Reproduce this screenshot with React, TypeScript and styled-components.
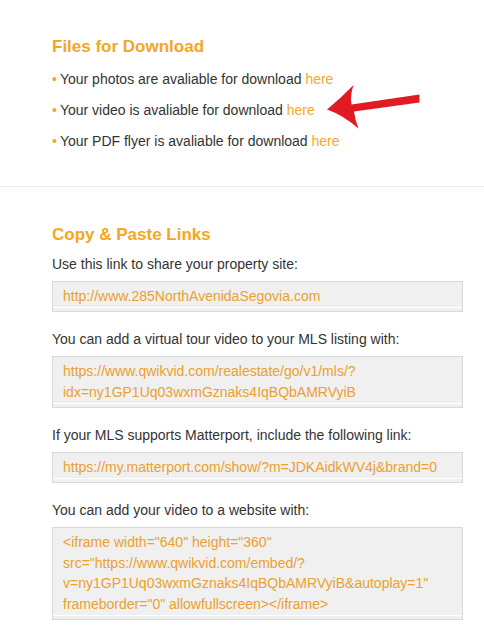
import React from 'react';
import styled, { createGlobalStyle } from 'styled-components';

const GlobalStyle = createGlobalStyle`
  body {
    margin: 0;
    background: #fff;
    font-family: "Liberation Sans", Arial, sans-serif;
    color: #333;
  }
`;

const Page = styled.div`
  width: 484px;
`;

const Section = styled.section<{ $top: number; $bottom: number; $divider?: boolean }>`
  position: relative;
  padding: ${(p) => p.$top}px 21px ${(p) => p.$bottom}px 52px;
  border-bottom: ${(p) => (p.$divider ? '1px solid #ebebeb' : 'none')};
`;

const Heading = styled.h2`
  margin: 0;
  font-size: 17px;
  line-height: 20px;
  font-weight: bold;
  color: #f5a623;
`;

const BulletList = styled.ul`
  list-style: none;
  margin: 7px 0 0;
  padding: 0;
`;

const BulletItem = styled.li`
  font-size: 14px;
  line-height: 31px;
  color: #333;

  &::before {
    content: '•';
    color: #f5a623;
    margin-right: 3px;
  }
`;

const Link = styled.a`
  color: #f7a72b;
  text-decoration: none;
`;

const Label = styled.p<{ $first?: boolean }>`
  margin: ${(p) => (p.$first ? '9px' : '0')} 0 6px;
  font-size: 14px;
  line-height: 21px;
  color: #333;
`;

const CodeBox = styled.div`
  margin-bottom: 17px;
  padding: 4px 10px 4px;
  border: 1px solid #d9d9d9;
  background: #f0f0f0;
  box-shadow: inset 0 -3px 0 #f0f0f0, inset 0 -4px 0 #fff;
  font-size: 14px;
  line-height: 20.9px;
  color: #eba12e;
  word-break: break-all;
`;

const Arrow = styled.svg`
  position: absolute;
  left: 325px;
  top: 82px;
`;

const files = ['photos are', 'video is', 'PDF flyer is'];

const links = [
  {
    label: 'Use this link to share your property site:',
    lines: ['http://www.285NorthAvenidaSegovia.com'],
  },
  {
    label: 'You can add a virtual tour video to your MLS listing with:',
    lines: ['https://www.qwikvid.com/realestate/go/v1/mls/?', 'idx=ny1GP1Uq03wxmGznaks4IqBQbAMRVyiB'],
  },
  {
    label: 'If your MLS supports Matterport, include the following link:',
    lines: ['https://my.matterport.com/show/?m=JDKAidkWV4j&brand=0'],
  },
  {
    label: 'You can add your video to a website with:',
    lines: [
      '<iframe width="640" height="360"',
      'src="https://www.qwikvid.com/embed/?',
      'v=ny1GP1Uq03wxmGznaks4IqBQbAMRVyiB&autoplay=1"',
      'frameborder="0" allowfullscreen></iframe>',
    ],
  },
];

const App: React.FC = () => {
  return (
    <Page>
      <GlobalStyle />
      <Section $top={37} $bottom={29} $divider>
        <Heading>Files for Download</Heading>
        <BulletList>
          {files.map((f) => (
            <BulletItem key={f}>
              Your {f} avaliable for download <Link href="#">here</Link>
            </BulletItem>
          ))}
        </BulletList>
        <Arrow width="100" height="50" viewBox="325 82 100 50">
          <path
            d="M327,109.5 Q341,98 353.5,85 Q350,95 351.5,104.5 L419.5,94.5 L419.5,102.5 L354,111.5 Q355,120 358.5,128.5 Q343,115 327,109.5 Z"
            fill="#e01b22"
          />
        </Arrow>
      </Section>
      <Section $top={38} $bottom={18}>
        <Heading>Copy &amp; Paste Links</Heading>
        {links.map((l, i) => (
          <React.Fragment key={l.label}>
            <Label $first={i === 0}>{l.label}</Label>
            <CodeBox>
              {l.lines.map((line) => (
                <div key={line}>{line}</div>
              ))}
            </CodeBox>
          </React.Fragment>
        ))}
      </Section>
    </Page>
  );
};

export default App;
